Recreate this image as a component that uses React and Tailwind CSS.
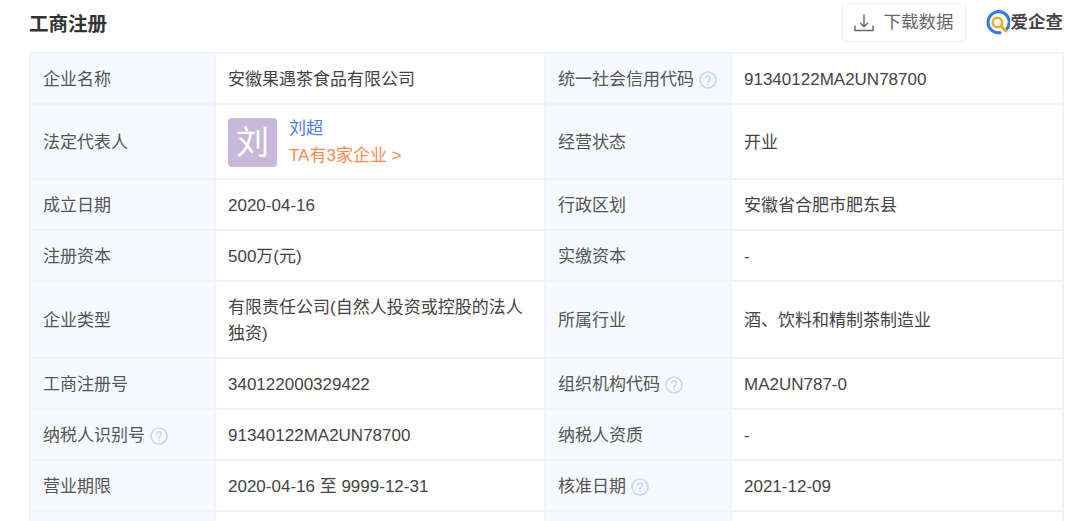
const FONT = "font-['Liberation_Sans','Noto_Sans_CJK_SC',sans-serif]";

function Help() {
  return (
    <svg viewBox="0 0 18 18" className="ml-[5px] h-[18px] w-[18px] shrink-0">
      <circle cx="9" cy="9" r="8" fill="none" stroke="#c4d9f7" strokeWidth="1.7" />
      <path
        d="M6.6 7.2a2.4 2.4 0 1 1 3.7 2c-.9.6-1.3 1-1.3 2"
        fill="none"
        stroke="#c4d9f7"
        strokeWidth="1.5"
        strokeLinecap="round"
      />
      <circle cx="9" cy="13.4" r="0.9" fill="#c4d9f7" />
    </svg>
  );
}

function Label({ children, help }) {
  return (
    <td className="border-2 border-[#eff4fc] bg-[#f6f9fe] pb-0 pl-[12px] pr-1 pt-[2px] text-[#555]">
      <div className="flex items-center">
        <span>{children}</span>
        {help ? <Help /> : null}
      </div>
    </td>
  );
}

function Value({ children }) {
  return <td className="border-2 border-[#eff4fc] pb-0 pl-[12px] pr-[12px] pt-[2px] text-[#444]">{children}</td>;
}

function Logo() {
  return (
    <div className="flex items-center">
      <svg viewBox="0 0 26 26" className="h-[25px] w-[25px]" fill="none">
        <path d="M22 20.5A11 11 0 1 0 15.5 23.7" stroke="#2f7bf0" strokeWidth="3.2" strokeLinecap="round" />
        <circle cx="13" cy="13" r="5" stroke="#f9a825" strokeWidth="2.6" />
        <path d="M16.8 16.8l5 5" stroke="#f9a825" strokeWidth="3" strokeLinecap="round" />
      </svg>
      <span className="ml-[1px] text-[17.5px] font-bold leading-none text-[#444]">爱企查</span>
    </div>
  );
}

export default function App() {
  return (
    <div className={`h-[521px] w-[1080px] overflow-hidden bg-white text-[17px] ${FONT}`}>
      <div className="flex h-[52px] items-start justify-between pl-[29px] pr-[17px]">
        <h2 className="mt-[11px] text-[19.5px] font-bold leading-[26px] text-[#333]">工商注册</h2>
        <div className="mt-[3px] flex items-center">
          <button
            type="button"
            className="flex h-[39px] w-[124px] items-center rounded-[3px] border border-[#e8eef8] bg-white pl-[11px] text-[17.5px] text-[#666]"
          >
            <svg viewBox="0 0 20 20" className="h-[20px] w-[20px]" fill="none" stroke="#666" strokeWidth="1.4">
              <path d="M10 1.5v12M6 9.8l4 4 4-4" />
              <path d="M1 12.5v5h18v-5" />
            </svg>
            <span className="ml-[10px]">下载数据</span>
          </button>
          <div className="ml-[19px]">
            <Logo />
          </div>
        </div>
      </div>
      <table className="ml-[29px] w-[1033px] table-fixed border-collapse border-2 border-[#eff4fc] leading-[26px]">
        <colgroup>
          <col className="w-[185px]" />
          <col className="w-[330px]" />
          <col className="w-[186px]" />
          <col className="w-[332px]" />
        </colgroup>
        <tbody>
          <tr className="h-[51px]">
            <Label>企业名称</Label>
            <Value>安徽果遇茶食品有限公司</Value>
            <Label help>统一社会信用代码</Label>
            <Value>91340122MA2UN78700</Value>
          </tr>
          <tr className="h-[75px]">
            <Label>法定代表人</Label>
            <Value>
              <div className="-mt-[1px] flex items-center">
                <div className="flex h-[49px] w-[49px] items-center justify-center rounded-[4px] bg-[#c8b8d9] text-[33px] leading-none text-white">
                  刘
                </div>
                <div className="ml-[12px] leading-[27px]">
                  <div className="text-[#4a7cf7]">刘超</div>
                  <div className="text-[#ff8a4c]">TA有3家企业 &gt;</div>
                </div>
              </div>
            </Value>
            <Label>经营状态</Label>
            <Value>开业</Value>
          </tr>
          <tr className="h-[51px]">
            <Label>成立日期</Label>
            <Value>2020-04-16</Value>
            <Label>行政区划</Label>
            <Value>安徽省合肥市肥东县</Value>
          </tr>
          <tr className="h-[51px]">
            <Label>注册资本</Label>
            <Value>500万(元)</Value>
            <Label>实缴资本</Label>
            <Value>-</Value>
          </tr>
          <tr className="h-[77px]">
            <Label>企业类型</Label>
            <Value>有限责任公司(自然人投资或控股的法人独资)</Value>
            <Label>所属行业</Label>
            <Value>酒、饮料和精制茶制造业</Value>
          </tr>
          <tr className="h-[51px]">
            <Label>工商注册号</Label>
            <Value>340122000329422</Value>
            <Label help>组织机构代码</Label>
            <Value>MA2UN787-0</Value>
          </tr>
          <tr className="h-[51px]">
            <Label help>纳税人识别号</Label>
            <Value>91340122MA2UN78700</Value>
            <Label>纳税人资质</Label>
            <Value>-</Value>
          </tr>
          <tr className="h-[51px]">
            <Label>营业期限</Label>
            <Value>2020-04-16 至 9999-12-31</Value>
            <Label help>核准日期</Label>
            <Value>2021-12-09</Value>
          </tr>
          <tr className="h-[51px]">
            <Label />
            <Value />
            <Label />
            <Value />
          </tr>
        </tbody>
      </table>
    </div>
  );
}
